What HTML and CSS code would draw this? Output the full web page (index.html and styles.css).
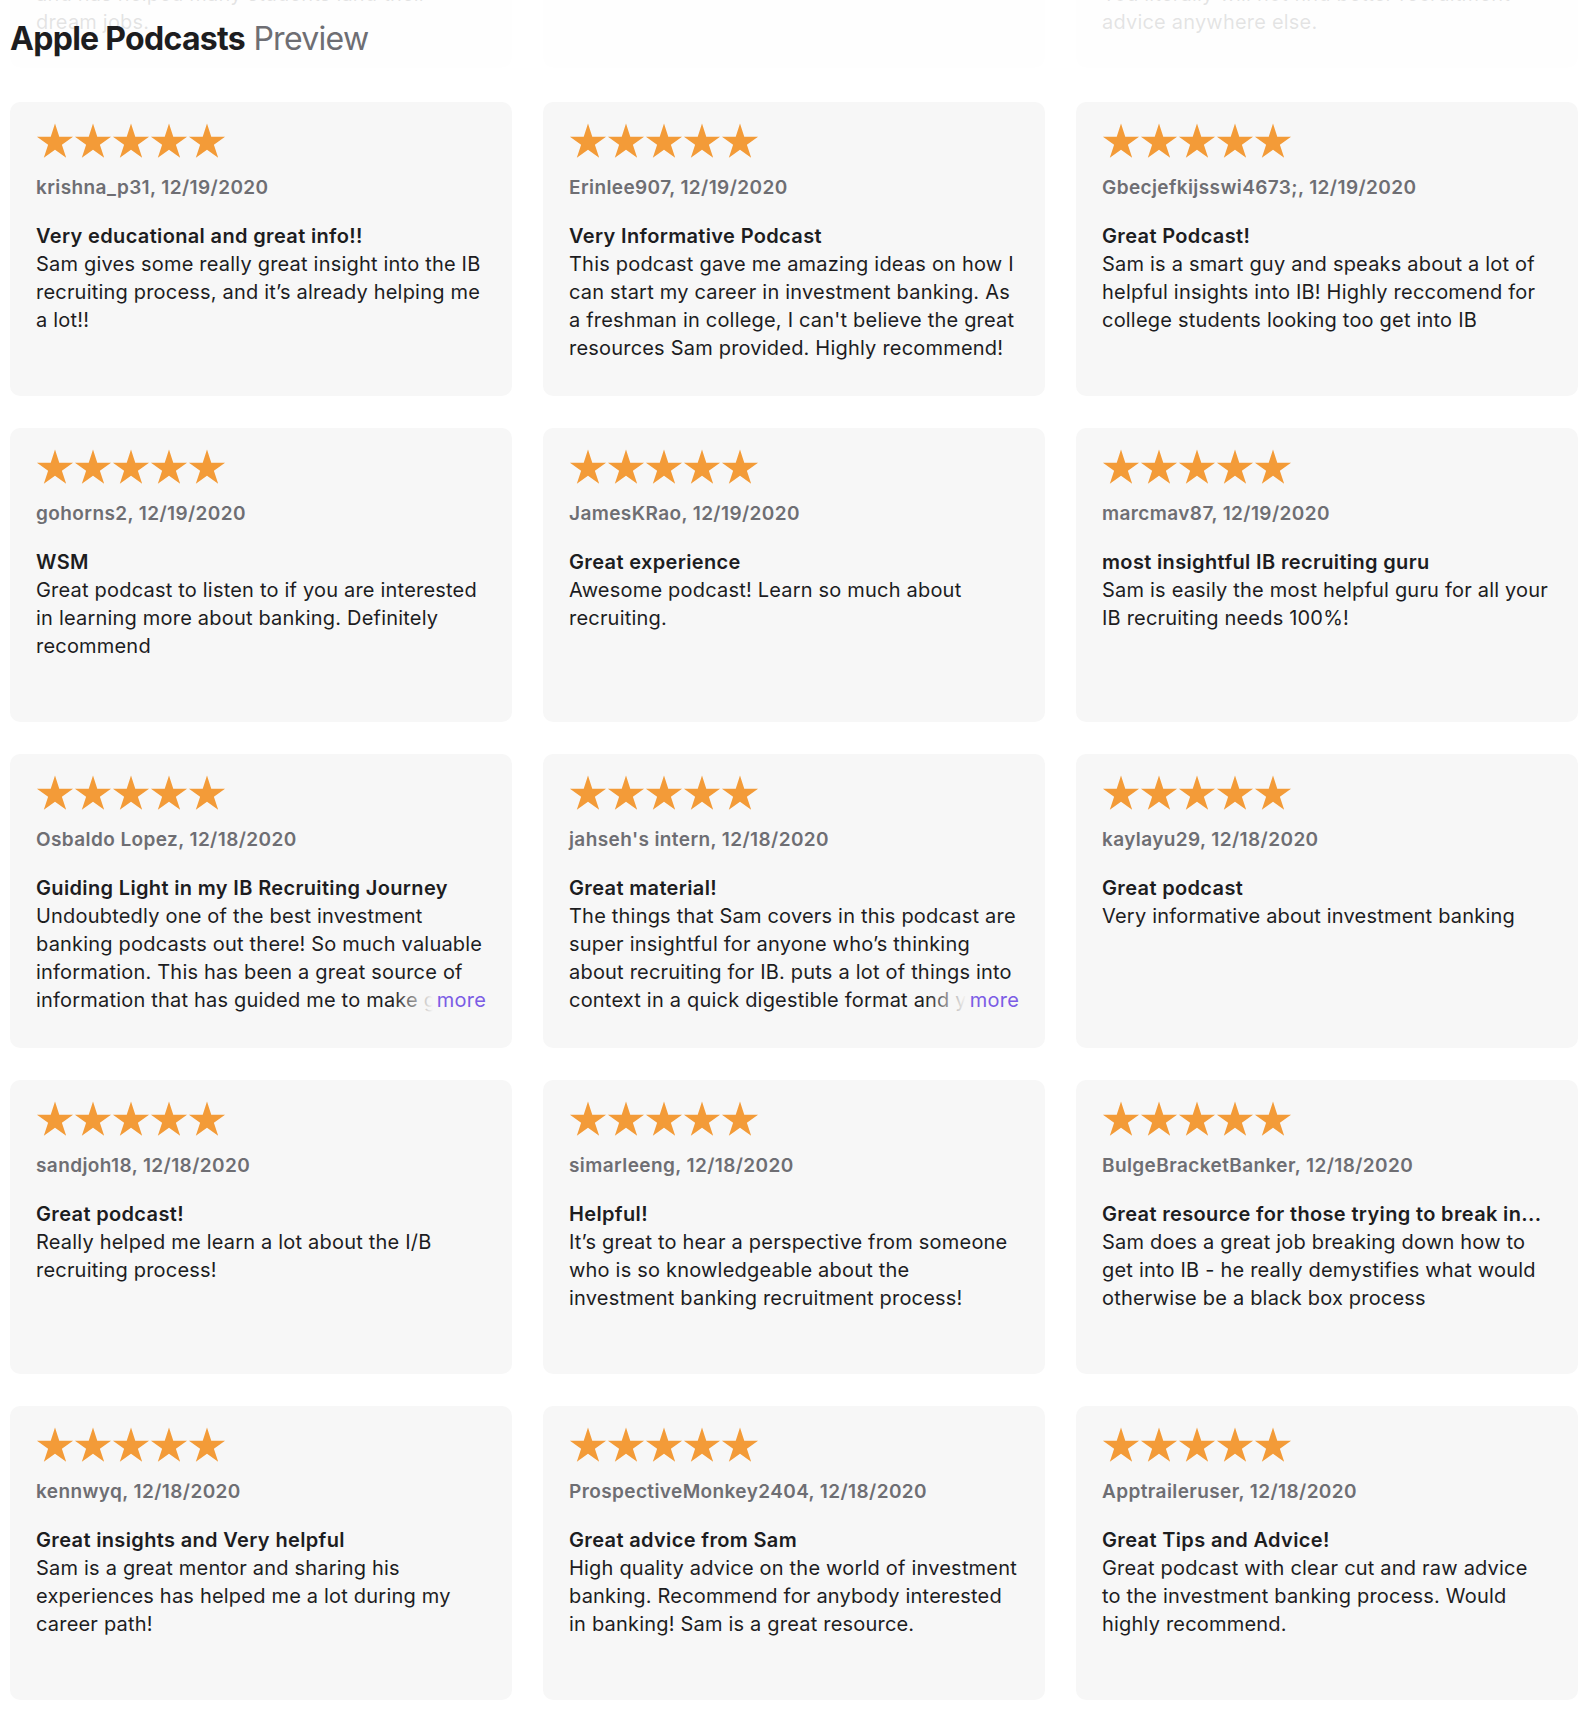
FILE: index.html
```html
<!DOCTYPE html>
<html lang="en">
<head>
<meta charset="utf-8">
<title>Apple Podcasts Preview – Ratings and Reviews</title>
<link rel="stylesheet" href="styles.css">
</head>
<body>
<svg class="defs" width="0" height="0" aria-hidden="true">
  <symbol id="star" viewBox="0 0 38 36">
    <polygon points="19,0.5 23.27,13.63 37.07,13.63 25.9,21.74 30.17,34.87 19,26.76 7.83,34.87 12.1,21.74 0.93,13.63 14.73,13.63"/>
  </symbol>
</svg>

<div class="page">
  <div class="prev-row">
    <div class="prev-card"><p>Sam breaks the whole process down step by step,<br>and has helped many students land their<br>dream jobs.</p></div>
    <div class="prev-card"></div>
    <div class="prev-card"><p>You literally will not find better recruitment<br>advice anywhere else.</p></div>
  </div>

  <header class="masthead">
    <h1 class="brand"><span class="brand-name">Apple Podcasts</span> <span class="brand-sub">Preview</span></h1>
  </header>

  <main class="reviews">
    <article class="review">
      <div class="stars"><svg><use href="#star"/></svg><svg><use href="#star"/></svg><svg><use href="#star"/></svg><svg><use href="#star"/></svg><svg><use href="#star"/></svg></div>
      <p class="byline">krishna_p31, 12/19/2020</p>
      <h3 class="title">Very educational and great info!!</h3>
      <p class="body">Sam gives some really great insight into the IB recruiting process, and it’s already helping me a lot!!</p>
    </article>
    <article class="review">
      <div class="stars"><svg><use href="#star"/></svg><svg><use href="#star"/></svg><svg><use href="#star"/></svg><svg><use href="#star"/></svg><svg><use href="#star"/></svg></div>
      <p class="byline">Erinlee907, 12/19/2020</p>
      <h3 class="title">Very Informative Podcast</h3>
      <p class="body">This podcast gave me amazing ideas on how I can start my career in investment banking. As a freshman in college, I can't believe the great resources Sam provided. Highly recommend!</p>
    </article>
    <article class="review">
      <div class="stars"><svg><use href="#star"/></svg><svg><use href="#star"/></svg><svg><use href="#star"/></svg><svg><use href="#star"/></svg><svg><use href="#star"/></svg></div>
      <p class="byline">Gbecjefkijsswi4673;, 12/19/2020</p>
      <h3 class="title">Great Podcast!</h3>
      <p class="body">Sam is a smart guy and speaks about a lot of helpful insights into IB! Highly reccomend for college students looking too get into IB</p>
    </article>

    <article class="review">
      <div class="stars"><svg><use href="#star"/></svg><svg><use href="#star"/></svg><svg><use href="#star"/></svg><svg><use href="#star"/></svg><svg><use href="#star"/></svg></div>
      <p class="byline">gohorns2, 12/19/2020</p>
      <h3 class="title">WSM</h3>
      <p class="body">Great podcast to listen to if you are interested in learning more about banking. Definitely recommend</p>
    </article>
    <article class="review">
      <div class="stars"><svg><use href="#star"/></svg><svg><use href="#star"/></svg><svg><use href="#star"/></svg><svg><use href="#star"/></svg><svg><use href="#star"/></svg></div>
      <p class="byline">JamesKRao, 12/19/2020</p>
      <h3 class="title">Great experience</h3>
      <p class="body">Awesome podcast! Learn so much about recruiting.</p>
    </article>
    <article class="review">
      <div class="stars"><svg><use href="#star"/></svg><svg><use href="#star"/></svg><svg><use href="#star"/></svg><svg><use href="#star"/></svg><svg><use href="#star"/></svg></div>
      <p class="byline">marcmav87, 12/19/2020</p>
      <h3 class="title">most insightful IB recruiting guru</h3>
      <p class="body">Sam is easily the most helpful guru for all your IB recruiting needs 100%!</p>
    </article>

    <article class="review">
      <div class="stars"><svg><use href="#star"/></svg><svg><use href="#star"/></svg><svg><use href="#star"/></svg><svg><use href="#star"/></svg><svg><use href="#star"/></svg></div>
      <p class="byline">Osbaldo Lopez, 12/18/2020</p>
      <h3 class="title">Guiding Light in my IB Recruiting Journey</h3>
      <div class="clamp">
        <p class="body">Undoubtedly one of the best investment banking podcasts out there! So much valuable information. This has been a great source of information that has guided me to make good decisions throughout my recruiting journey.</p>
        <a class="more" href="#">more</a>
      </div>
    </article>
    <article class="review">
      <div class="stars"><svg><use href="#star"/></svg><svg><use href="#star"/></svg><svg><use href="#star"/></svg><svg><use href="#star"/></svg><svg><use href="#star"/></svg></div>
      <p class="byline">jahseh's intern, 12/18/2020</p>
      <h3 class="title">Great material!</h3>
      <div class="clamp">
        <p class="body">The things that Sam covers in this podcast are super insightful for anyone who’s thinking about recruiting for IB. puts a lot of things into context in a quick digestible format and you can listen on the go.</p>
        <a class="more" href="#">more</a>
      </div>
    </article>
    <article class="review">
      <div class="stars"><svg><use href="#star"/></svg><svg><use href="#star"/></svg><svg><use href="#star"/></svg><svg><use href="#star"/></svg><svg><use href="#star"/></svg></div>
      <p class="byline">kaylayu29, 12/18/2020</p>
      <h3 class="title">Great podcast</h3>
      <p class="body">Very informative about investment banking</p>
    </article>

    <article class="review">
      <div class="stars"><svg><use href="#star"/></svg><svg><use href="#star"/></svg><svg><use href="#star"/></svg><svg><use href="#star"/></svg><svg><use href="#star"/></svg></div>
      <p class="byline">sandjoh18, 12/18/2020</p>
      <h3 class="title">Great podcast!</h3>
      <p class="body">Really helped me learn a lot about the I/B recruiting process!</p>
    </article>
    <article class="review">
      <div class="stars"><svg><use href="#star"/></svg><svg><use href="#star"/></svg><svg><use href="#star"/></svg><svg><use href="#star"/></svg><svg><use href="#star"/></svg></div>
      <p class="byline">simarleeng, 12/18/2020</p>
      <h3 class="title">Helpful!</h3>
      <p class="body">It’s great to hear a perspective from someone who is so knowledgeable about the investment banking recruitment process!</p>
    </article>
    <article class="review">
      <div class="stars"><svg><use href="#star"/></svg><svg><use href="#star"/></svg><svg><use href="#star"/></svg><svg><use href="#star"/></svg><svg><use href="#star"/></svg></div>
      <p class="byline">BulgeBracketBanker, 12/18/2020</p>
      <h3 class="title">Great resource for those trying to break in...</h3>
      <p class="body">Sam does a great job breaking down how to get into IB - he really demystifies what would otherwise be a black box process</p>
    </article>

    <article class="review">
      <div class="stars"><svg><use href="#star"/></svg><svg><use href="#star"/></svg><svg><use href="#star"/></svg><svg><use href="#star"/></svg><svg><use href="#star"/></svg></div>
      <p class="byline">kennwyq, 12/18/2020</p>
      <h3 class="title">Great insights and Very helpful</h3>
      <p class="body">Sam is a great mentor and sharing his experiences has helped me a lot during my career path!</p>
    </article>
    <article class="review">
      <div class="stars"><svg><use href="#star"/></svg><svg><use href="#star"/></svg><svg><use href="#star"/></svg><svg><use href="#star"/></svg><svg><use href="#star"/></svg></div>
      <p class="byline">ProspectiveMonkey2404, 12/18/2020</p>
      <h3 class="title">Great advice from Sam</h3>
      <p class="body">High quality advice on the world of investment banking. Recommend for anybody interested in banking! Sam is a great resource.</p>
    </article>
    <article class="review">
      <div class="stars"><svg><use href="#star"/></svg><svg><use href="#star"/></svg><svg><use href="#star"/></svg><svg><use href="#star"/></svg><svg><use href="#star"/></svg></div>
      <p class="byline">Apptraileruser, 12/18/2020</p>
      <h3 class="title">Great Tips and Advice!</h3>
      <p class="body">Great podcast with clear cut and raw advice to the investment banking process. Would highly recommend.</p>
    </article>
  </main>
</div>
</body>
</html>
```

FILE: styles.css
```css
* {
  box-sizing: border-box;
}

html,
body {
  margin: 0;
  background: #ffffff;
}

body {
  font-family: Inter, "Noto Sans", "Liberation Sans", sans-serif;
  color: #1d1d1f;
  -webkit-font-smoothing: antialiased;
}

.defs {
  position: absolute;
  width: 0;
  height: 0;
  overflow: hidden;
}

.page {
  position: relative;
  padding: 0 10px;
}

/* Row of the previous shelf, scrolled mostly out of view */
.prev-row {
  display: grid;
  grid-template-columns: repeat(3, 1fr);
  column-gap: 31px;
  height: 68px;
}

.prev-card {
  display: flex;
  flex-direction: column;
  justify-content: flex-end;
  overflow: hidden;
  background: #f7f7f7;
  border-radius: 0 0 10px 10px;
  padding: 0 26px 32px;
}

.prev-card p {
  margin: 0;
  font-size: 20px;
  line-height: 28px;
  letter-spacing: 0.2px;
  color: #1d1d1f;
  white-space: nowrap;
}

/* Translucent sticky bar sitting over the scrolled shelf */
.masthead {
  position: absolute;
  top: 0;
  left: 0;
  right: 0;
  height: 76px;
  background: rgba(255, 255, 255, 0.88);
  padding: 19px 0 0 10px;
}

.brand {
  margin: 0;
  font-size: 32px;
  line-height: 40px;
  font-weight: 400;
  letter-spacing: -0.7px;
}

.brand-name {
  font-weight: 700;
  color: #1d1d1f;
}

.brand-sub {
  color: #6e6e73;
}

/* Review grid */
.reviews {
  display: grid;
  grid-template-columns: repeat(3, 1fr);
  grid-auto-rows: 294px;
  column-gap: 31px;
  row-gap: 32px;
  margin-top: 34px;
}

.review {
  background: #f7f7f7;
  border-radius: 10px;
  padding: 21px 26px 0;
  overflow: hidden;
}

.stars {
  display: flex;
  height: 36px;
}

.stars svg {
  width: 38px;
  height: 36px;
  fill: #f39b38;
}

.byline {
  margin: 15px 0 0;
  font-size: 19px;
  line-height: 28px;
  font-weight: 600;
  letter-spacing: 0.4px;
  color: #6e6e73;
}

.title {
  margin: 20px 0 0;
  font-size: 20px;
  line-height: 28px;
  font-weight: 600;
  letter-spacing: 0.35px;
  color: #1d1d1f;
  white-space: nowrap;
  overflow: hidden;
  text-overflow: ellipsis;
}

.body {
  margin: 0;
  font-size: 20px;
  line-height: 28px;
  font-weight: 400;
  letter-spacing: 0.2px;
  color: #1d1d1f;
}

/* Four-line excerpt with a fading "more" link */
.clamp {
  position: relative;
  max-height: 112px;
  overflow: hidden;
}

.more {
  position: absolute;
  right: 0;
  bottom: 0;
  padding-left: 44px;
  font-size: 20px;
  line-height: 28px;
  letter-spacing: 0.2px;
  color: #7b5ce5;
  text-decoration: none;
  background: linear-gradient(to right, rgba(247, 247, 247, 0) 0, #f7f7f7 40px);
}
```
